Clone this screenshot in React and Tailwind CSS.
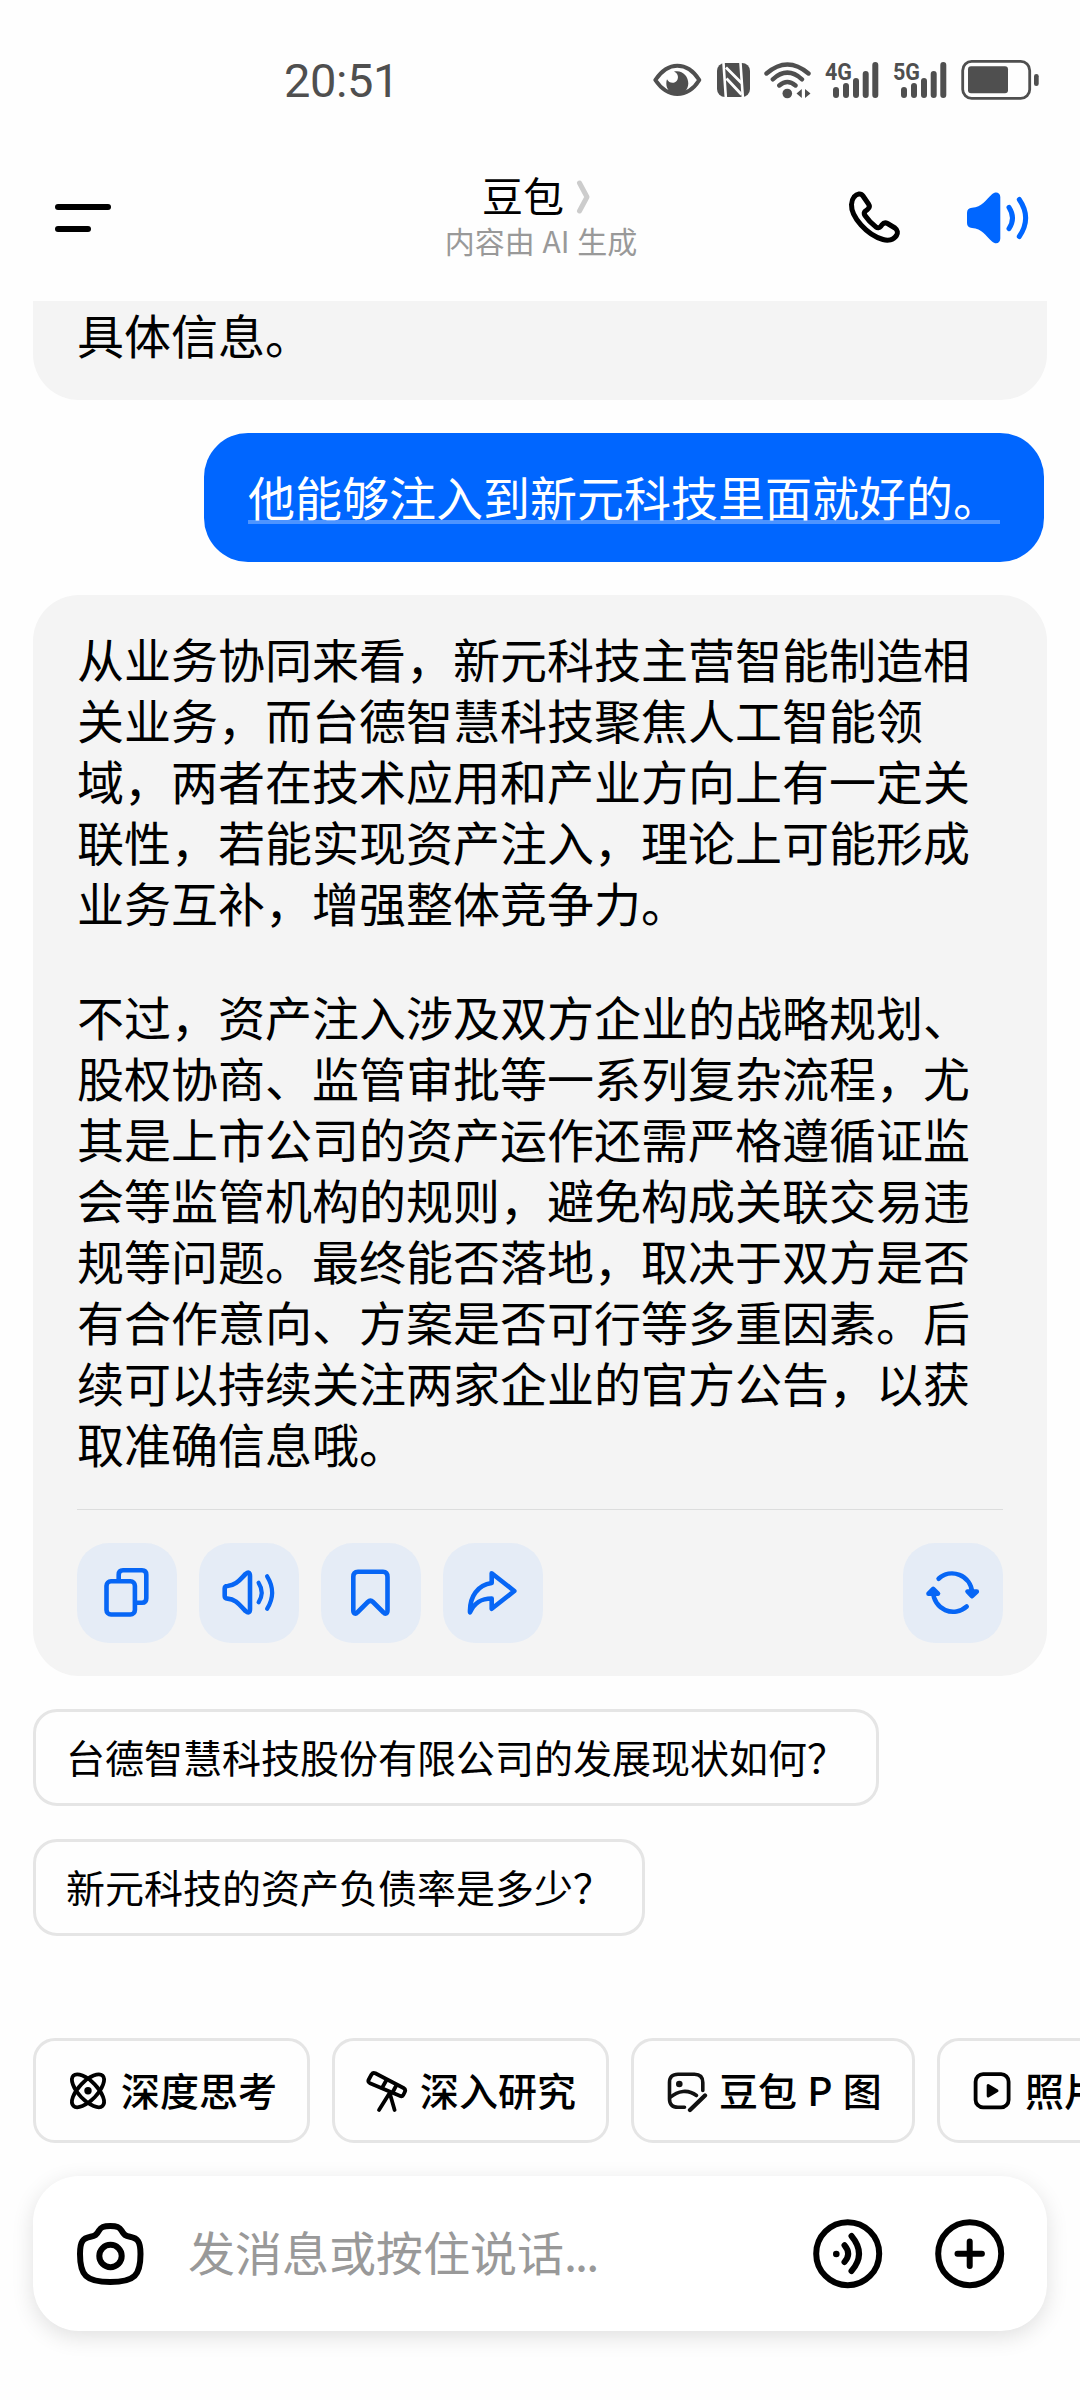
const suggestions = ['台德智慧科技股份有限公司的发展现状如何？', '新元科技的资产负债率是多少？'];

const reply = [
  '从业务协同来看，新元科技主营智能制造相关业务，而台德智慧科技聚焦人工智能领域，两者在技术应用和产业方向上有一定关联性，若能实现资产注入，理论上可能形成业务互补，增强整体竞争力。',
  '不过，资产注入涉及双方企业的战略规划、股权协商、监管审批等一系列复杂流程，尤其是上市公司的资产运作还需严格遵循证监会等监管机构的规则，避免构成关联交易违规等问题。最终能否落地，取决于双方是否有合作意向、方案是否可行等多重因素。后续可以持续关注两家企业的官方公告，以获取准确信息哦。',
];

const Icon = ({ w = 44, h = 44, sw = 4, className = '', children }) => (
  <svg
    width={w}
    height={h}
    viewBox={`0 0 ${w} ${h}`}
    fill="none"
    stroke="currentColor"
    strokeWidth={sw}
    strokeLinecap="round"
    strokeLinejoin="round"
    className={`block shrink-0 ${className}`}
  >
    {children}
  </svg>
);

const Signal = ({ label, className }) => (
  <Icon w={56} h={40} sw={6} className={`overflow-visible ${className}`}>
    <text
      x="0"
      y="20"
      textLength="27"
      lengthAdjust="spacingAndGlyphs"
      fill="currentColor"
      stroke="none"
      fontSize="24"
      fontWeight="700"
      fontFamily="Roboto, sans-serif"
    >
      {label}
    </text>
    <path d="M11 30V35M21 26V35M31 21V35M40.7 14V35M50.3 5V35" />
  </Icon>
);

const StatusBar = () => (
  <div className="flex h-40 items-center pl-[284px] text-[#4f4f4f]">
    <span className="w-[368px] font-[Roboto,sans-serif] text-[47px] leading-none tracking-[-0.4px]">20:51</span>
    <Icon w={50} h={40}>
      <path d="M3.3 20C9 11.500 16 5.700 25.300 5.700S42 11.500 47.300 20C42 28.500 34.600 34 25.300 34S9 28.500 3.300 20Z" />
      <path
        d="M22 11.500C30 9.500 36.500 16 36.300 23.500C36.200 30 31 34.500 25.300 34.500C19 34.500 14.300 29.500 14.300 23.500C14.300 22 14.500 20.500 15 19.300C17 23.500 22.500 24 25 20.500C27.200 17 25.500 13 22 11.500Z"
        fill="currentColor"
        stroke="none"
      />
    </Icon>
    <Icon w={36} h={40} className="ml-[14px]">
      <rect x="1" y="3" width="33" height="34" rx="8" fill="currentColor" stroke="none" />
      <path d="M7.500 3L9.800 37M24.500 3L26.800 37" stroke="#fefefe" strokeWidth="2.600" strokeLinecap="butt" />
      <path d="M10 7.500L25.500 23M10.500 18.500L25.500 34.500" stroke="#fefefe" strokeWidth="2.800" strokeLinecap="butt" />
    </Icon>
    <Icon w={50} h={40} sw={4.4} className="ml-[11px]">
      <path d="M3.500 13.500Q24.300-4.500 45.500 13.500M9.800 19.300Q24.300 6 39 19.300M16.300 25.500Q24.300 18.500 32.500 25.500" />
      <circle cx="24.300" cy="33.500" r="4.800" fill="currentColor" stroke="none" />
      <path d="M33.500 33.500L38.800 29V38ZM42 29L47.500 33.500L42 38Z" fill="currentColor" stroke="none" />
    </Icon>
    <Signal label="4G" className="ml-[12px]" />
    <Signal label="5G" className="ml-[12px]" />
    <Icon w={80} h={44} sw={2.8} className="ml-[11px]">
      <rect x="2.700" y="3.400" width="67" height="37" rx="9" />
      <rect x="8" y="8.300" width="40" height="27" rx="3" fill="currentColor" stroke="none" />
      <rect x="74" y="16" width="4.700" height="12" rx="2.300" fill="currentColor" stroke="none" />
    </Icon>
  </div>
);

const Header = () => (
  <header className="flex h-[141px] pt-[13px]">
    <div className="flex w-[440px] flex-col gap-4 pt-[31px] pl-[55px]">
      <span className="h-[6px] w-14 rounded-full bg-black" />
      <span className="h-[6px] w-9 rounded-full bg-black" />
    </div>
    <div className="flex w-[202px] flex-col items-center">
      <div className="-mt-px flex items-center pr-[6px] text-[41px] leading-[42px]">
        <span>豆包</span>
        <Icon w={18} h={36} sw={5} className="mt-[7px] ml-[12px] text-[#ccc]">
          <path d="M3.500 4L11 18L3.500 32" />
        </Icon>
      </div>
      <p className="mt-[7px] text-[30px] leading-[36px] whitespace-nowrap text-[#999] [word-spacing:1px]">
        内容由 AI 生成
      </p>
    </div>
    <Icon w={60} h={60} sw={5} className="mt-[15px] ml-[203px]">
      <path d="M9 9C12 5.500 16 5 18 8L23.500 16C25 18.200 24.500 20 22.500 21.500L20.500 23C19 24.300 19 26 20 27.500C23 32 27 36 31 39C32.500 40.200 34.500 40 35.700 38.500L37 36.800C38.500 34.800 40.500 34.300 42.500 35.500L50 40C52.800 42 53 45 51.500 47.500C48.500 52 43 53 38 51.500C22 47 6 29 6.500 16.500C6.700 13 7.500 10.800 9 9Z" />
    </Icon>
    <Icon w={68} h={56} sw={5} className="mt-[17px] ml-[60px] text-[#06f]">
      <path
        d="M2 23Q2 18 7 17.800C17 17 20.500 10.500 27 4.300C30.500 1 35.300 2.500 35.300 7V48.500C35.300 53.500 30.500 54.700 27 51.500C20.500 45.500 17 38.700 7 38Q2 37.700 2 33Z"
        fill="currentColor"
        stroke="none"
      />
      <path d="M44 17.300Q51 28 44 38.700M54.300 9.500Q67 28 54.300 46.500" />
    </Icon>
  </header>
);

const ActionButton = ({ children, className = '' }) => (
  <button className={`size-[100px] rounded-[32px] bg-[#e5ecf6] text-[#0766f5] ${className}`}>
    <Icon w={100} h={100} sw={4.6}>
      {children}
    </Icon>
  </button>
);

const Actions = () => (
  <div className="mt-[36px] flex gap-[22px] border-t border-[#dcdddd] pt-[33px]">
    <ActionButton>
      <rect x="29.500" y="38.300" width="28.400" height="33.200" rx="4.500" />
      <path d="M41.700 37V31.700Q41.700 27.200 46 27.200H65Q69.300 27.200 69.300 31.700V55.300Q69.300 59.800 65 59.800H59" />
    </ActionButton>
    <ActionButton>
      <path d="M25.700 45.500Q25.700 43 28.500 43C37 42.500 41 36.500 46.500 31Q51 27.500 51 33V66Q51 71.500 46.500 68C41 62.500 37 56 28.500 55.600Q25.700 55.500 25.700 53Z" />
      <path d="M59.600 39.800Q65.800 49.500 59.600 59.300M68.100 33.300Q78.200 49.500 68.100 65.800" strokeWidth="4.200" />
    </ActionButton>
    <ActionButton>
      <path d="M32.300 34Q32.300 28.800 37 28.800H62Q66.500 28.800 66.500 34V67.500C66.500 70.500 64.300 71.500 62.500 69.500L52 59Q49.400 56.500 46.800 59L36.300 69.500C34.500 71.500 32.300 70.500 32.300 67.500Z" />
    </ActionButton>
    <ActionButton>
      <path d="M48.700 30.200L71.300 48L48.700 65.800V55.500C38 55.500 31.500 59.500 27 69.300C26.500 53 35 42 48.700 40Z" />
    </ActionButton>
    <ActionButton className="ml-auto">
      <path d="M35.600 35.700A20 20 0 0 1 69 49M63.700 63.500A20 20 0 0 1 30.200 49" />
      <path d="M64.500 48.500H73.800L69 53.200ZM25.500 50.700L30.200 46L35 50.700Z" />
    </ActionButton>
  </div>
);

const Chip = ({ icon, children }) => (
  <button className="flex h-[105px] shrink-0 items-center gap-[11px] rounded-[22px] border-3 border-[#e5e5e5] px-[30px] text-[39px] font-medium whitespace-nowrap">
    {icon}
    <span className="pb-[3px]">{children}</span>
  </button>
);

const Chips = () => (
  <div className="mt-[102px] flex gap-[22px] pl-[33px]">
    <Chip
      icon={
        <Icon sw={3.8}>
          <ellipse cx="22" cy="21.800" rx="21" ry="9.300" transform="rotate(46 22 21.800)" />
          <ellipse cx="22" cy="21.800" rx="21" ry="9.300" transform="rotate(-46 22 21.800)" />
          <circle cx="22" cy="21.800" r="3.700" fill="currentColor" stroke="none" />
        </Icon>
      }
    >
      深度思考
    </Chip>
    <Chip
      icon={
        <Icon sw={3.8}>
          <path d="M10.300 4.300L38.500 19Q41 20.500 39.800 23L38.300 26Q37 28 34.700 26.800L5 14.300Q2.500 13 3.800 10.500L6.500 5.500Q8 3.200 10.300 4.300Z" />
          <path d="M21.500 11L17 19M31.500 16L27.500 23.500M24 25L14 41M25 25L29.600 41" />
        </Icon>
      }
    >
      深入研究
    </Chip>
    <Chip
      icon={
        <Icon sw={3.6} className="text-[#111]">
          <path d="M20.500 38.300H14Q5.500 38.300 5.500 30V13.500Q5.500 5.200 14 5.200H30.500Q38.800 5.200 38.800 13.500V21.500" />
          <path d="M6 28.500C14 21.500 24 20 32.500 26.500" />
          <path d="M41 26.500L26 41" strokeWidth="4.300" />
          <circle cx="15.300" cy="15" r="3.300" fill="currentColor" stroke="none" />
        </Icon>
      }
    >
      <span className="block w-[163px] text-left [word-spacing:1.5px]">豆包 P 图</span>
    </Chip>
    <Chip
      icon={
        <Icon sw={3.8}>
          <rect x="5.600" y="5.200" width="33" height="33.200" rx="7.500" />
          <path d="M18.200 16.500V27L27 21.800Z" fill="currentColor" strokeWidth="3" />
        </Icon>
      }
    >
      照片
    </Chip>
  </div>
);

const InputBar = () => (
  <div className="mx-[33px] mt-[33px] flex h-[155px] items-center rounded-[46px] bg-white shadow-[0_6px_22px_rgba(0,0,0,0.12)]">
    <Icon w={72} h={66} sw={6} className="ml-[42px]">
      <path d="M35.300 5C42 5 44.500 6 46.500 9.500C49 14 50.500 15 55 15.800C62.500 17.300 65.500 20 65.500 33C65.500 54 60 61 35.300 61S5 54 5 33C5 20 8 17.300 15.500 15.800C20 15 21.500 14 24 9.500C26 6 28.500 5 35.300 5Z" />
      <circle cx="35.500" cy="35" r="11.200" />
    </Icon>
    <span className="ml-[41px] pb-[6px] text-[47px] leading-[61px] text-[#999]">
      发消息或按住说话<span className="tracking-[-2px]">...</span>
    </span>
    <Icon w={70} h={70} sw={6} className="ml-auto">
      <circle cx="34.700" cy="34.700" r="31.500" />
      <circle cx="23.300" cy="35" r="3.300" fill="currentColor" stroke="none" />
      <path d="M31.500 26.300Q38.800 35 31.500 43M38.500 17Q53.500 35 38.500 52" />
    </Icon>
    <Icon w={70} h={70} sw={6} className="mr-[42px] ml-[52px]">
      <circle cx="34.700" cy="34.700" r="31.500" />
      <path d="M22.500 34.700H46.900M34.700 22.500V46.900" />
    </Icon>
  </div>
);

const App = () => {
  return (
    <div className="flex h-[2400px] w-[1080px] flex-col overflow-hidden bg-[#fefefe] font-['Noto_Sans_CJK_SC',sans-serif] text-black [text-spacing-trim:space-all]">
      <StatusBar />
      <Header />
      <main className="flex flex-col px-[33px] text-[47px] leading-[61px]">
        <div className="h-[99px] rounded-b-[46px] bg-[#f4f4f4] pt-[2px] pl-[44px]">具体信息。</div>
        <div className="mt-[33px] mr-[3px] h-[129px] self-end rounded-[44px] bg-[#06f] px-[44px] pt-[31px] text-white">
          <p className="h-[60px] border-b-4 border-[#4d94ff] leading-[64px]">他能够注入到新元科技里面就好的。</p>
        </div>
        <div className="mt-[33px] h-[1081px] rounded-[46px] bg-[#f4f4f4] px-[44px] pt-[32px]">
          <div className="flex flex-col gap-[53px]">
            {reply.map((text, i) => (
              <p key={i}>{text}</p>
            ))}
          </div>
          <Actions />
        </div>
        <div className="mt-[33px] flex flex-col items-start gap-[33px]">
          {suggestions.map((text) => (
            <button
              key={text}
              className="h-[97px] rounded-[24px] border-3 border-[#e5e5e5] px-[30px] pb-[4px] text-[39px] leading-[56px]"
            >
              {text}
            </button>
          ))}
        </div>
      </main>
      <Chips />
      <InputBar />
    </div>
  );
};

export default App;
